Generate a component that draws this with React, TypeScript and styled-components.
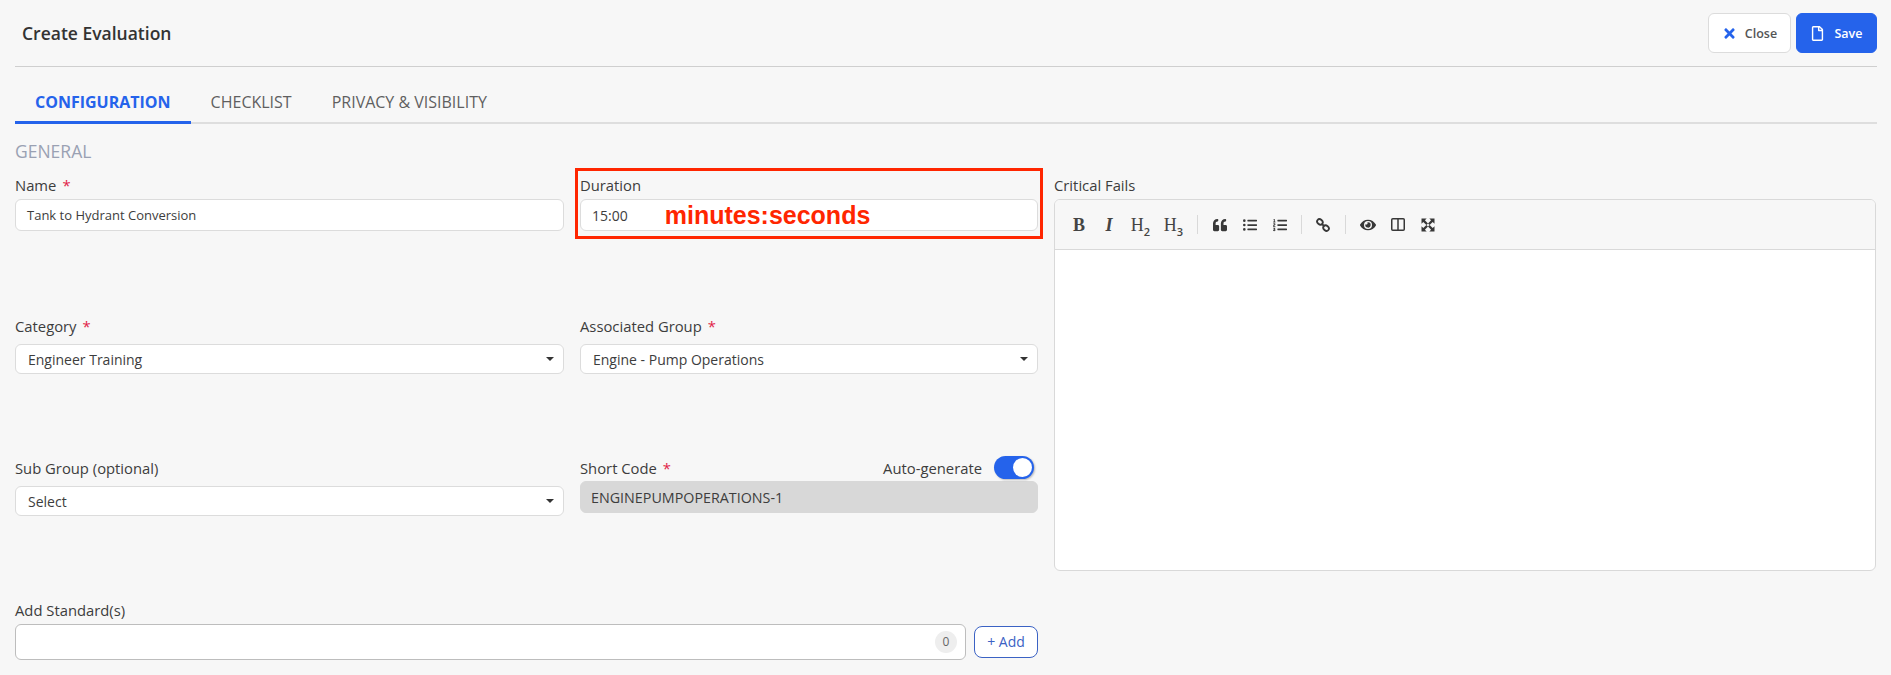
import { ReactNode } from 'react'
import styled, { createGlobalStyle } from 'styled-components'
import {
  FaEye,
  FaListOl,
  FaListUl,
  FaQuoteLeft,
  FaRegFile,
  FaTimes,
} from 'react-icons/fa'

const GlobalStyle = createGlobalStyle`
  html, body {
    margin: 0;
    background: #f7f7f7;
  }
  body {
    font-family: "Open Sans", "Noto Sans", sans-serif;
    color: #3a3a3a;
  }
`

const Page = styled.main`
  width: 1891px;
  height: 675px;
  box-sizing: border-box;
  padding: 0 14px 0 15px;
  overflow: hidden;
`

const Header = styled.header`
  height: 67px;
  box-sizing: border-box;
  padding: 13px 0 0 7px;
  display: flex;
  justify-content: space-between;
  align-items: flex-start;
  border-bottom: 1px solid #cfcfcf;
`

const Title = styled.h1`
  margin: 0;
  line-height: 41px;
  font-size: 17.5px;
  font-weight: 600;
  color: #333;
`

const Actions = styled.div`
  display: flex;
  gap: 5px;
`

const ActionButton = styled.button<{ $primary?: boolean }>`
  height: 40px;
  box-sizing: border-box;
  width: ${(p) => (p.$primary ? '81px' : '83px')};
  padding: 0;
  display: flex;
  align-items: center;
  justify-content: center;
  gap: ${(p) => (p.$primary ? '9px' : '8px')};
  border-radius: 6px;
  border: 1px solid ${(p) => (p.$primary ? '#2563eb' : '#dcdcdc')};
  background: ${(p) => (p.$primary ? '#2563eb' : '#fff')};
  color: ${(p) => (p.$primary ? '#fff' : '#555')};
  font-family: inherit;
  font-size: 12.5px;
  font-weight: 600;
  svg {
    color: ${(p) => (p.$primary ? '#fff' : '#2563eb')};
    font-size: 15px;
  }
`

const Tabs = styled.nav`
  height: 57px;
  box-sizing: border-box;
  display: flex;
  align-items: flex-end;
  border-bottom: 2px solid #dedede;
`

const Tab = styled.a<{ $active?: boolean }>`
  height: 38px;
  box-sizing: border-box;
  padding: 0 20px;
  margin-bottom: -2px;
  font-size: 16px;
  line-height: 33px;
  font-weight: ${(p) => (p.$active ? 700 : 400)};
  color: ${(p) => (p.$active ? '#2563eb' : '#5f5f5f')};
  border-bottom: 3px solid ${(p) => (p.$active ? '#2563eb' : 'transparent')};
`

const SectionTitle = styled.h2`
  margin: 0;
  height: 52px;
  line-height: 54px;
  font-size: 17.5px;
  font-weight: 400;
  color: #9aa1b3;
`

const FormGrid = styled.div`
  display: grid;
  grid-template-columns: 549px 458px 822px;
  column-gap: 16px;
  grid-template-rows: 141px 142px 141.5px auto;
`

const Field = styled.div`
  position: relative;
`

const EditorField = styled.div`
  grid-column: 3;
  grid-row: 1 / span 3;
`

const WideField = styled.div`
  grid-column: 1 / span 2;
`

const LabelRow = styled.div`
  height: 23px;
  display: flex;
  justify-content: space-between;
  align-items: flex-start;
`

const Label = styled.label`
  font-size: 14.8px;
  line-height: 18px;
  color: #3d3d3d;
`

const Required = styled.span`
  color: #e11d48;
  margin-left: 6px;
`

const Control = styled.div<{ $readonly?: boolean }>`
  height: 32px;
  box-sizing: border-box;
  display: flex;
  align-items: center;
  justify-content: space-between;
  padding: 0 9px 0 10px;
  border-radius: 6px;
  border: 1px solid ${(p) => (p.$readonly ? '#d8d8d8' : '#dcdcdc')};
  background: ${(p) => (p.$readonly ? '#d8d8d8' : '#fff')};
  font-size: 14px;
  color: #3d3d3d;
`

const NameControl = styled(Control)`
  font-size: 13px;
  padding-left: 11px;
`

const SelectControl = styled(Control)`
  height: 30px;
  margin-top: 4px;
  padding-left: 12px;
`

const Caret = styled.span`
  width: 0;
  height: 0;
  border-left: 4px solid transparent;
  border-right: 4px solid transparent;
  border-top: 4px solid #333;
`

const DurationControl = styled(Control)`
  justify-content: flex-start;
  padding-left: 11px;
`

const Annotation = styled.span`
  margin-left: 37px;
  font-family: "Liberation Sans", Arial, sans-serif;
  font-size: 25px;
  font-weight: 700;
  color: #ff2600;
`

const RedFrame = styled.div`
  position: absolute;
  top: -8px;
  left: -5px;
  width: 468px;
  height: 71px;
  box-sizing: border-box;
  border: 3px solid #ff2600;
  pointer-events: none;
`

const AutoGenerate = styled.div`
  display: flex;
  align-items: center;
  gap: 12px;
  margin: -3px 4px 0 0;
  font-size: 14.8px;
  line-height: 20px;
  color: #3d3d3d;
`

const Toggle = styled.span`
  width: 40px;
  height: 23px;
  box-sizing: border-box;
  padding: 2px;
  border-radius: 12px;
  display: flex;
  justify-content: flex-end;
  background: #2563eb;
  box-shadow: 1px 1px 2px rgba(0, 0, 0, 0.25);
`

const Knob = styled.span`
  width: 19px;
  height: 19px;
  border-radius: 50%;
  background: #fff;
`

const ShortCodeControl = styled(Control)`
  margin-top: -1px;
  font-size: 14.3px;
`

const Editor = styled.div`
  width: 822px;
  height: 372px;
  box-sizing: border-box;
  border: 1px solid #d9d9d9;
  border-radius: 6px;
  background: #fff;
  overflow: hidden;
`

const Toolbar = styled.div`
  height: 50px;
  box-sizing: border-box;
  padding-left: 9px;
  display: flex;
  align-items: center;
  background: #f7f7f7;
  border-bottom: 1px solid #d9d9d9;
`

const Tool = styled.span<{ $width?: number }>`
  width: ${(p) => p.$width ?? 30}px;
  display: flex;
  align-items: center;
  justify-content: center;
  color: #383838;
  font-size: 14px;
`

const EyeTool = styled(Tool)`
  font-size: 16px;
`

const Glyph = styled.span<{ $italic?: boolean; $light?: boolean }>`
  font-family: "Liberation Serif", "Times New Roman", serif;
  font-size: 18px;
  line-height: 20px;
  font-weight: ${(p) => (p.$light ? 400 : 700)};
  font-style: ${(p) => (p.$italic ? 'italic' : 'normal')};
  color: #444;
  sub {
    font-family: "Open Sans", sans-serif;
    font-weight: 600;
    font-size: 11px;
    line-height: 0;
  }
`

const Separator = styled.i<{ $gap?: number }>`
  width: 1px;
  height: 19px;
  margin: 0 ${(p) => p.$gap ?? 7}px;
  background: #d9d9d9;
`

const StandardsRow = styled.div`
  display: flex;
  align-items: center;
  gap: 8px;
`

const StandardsInput = styled.div`
  flex: 1;
  height: 36px;
  box-sizing: border-box;
  padding-right: 8px;
  display: flex;
  align-items: center;
  justify-content: flex-end;
  background: #fff;
  border: 1px solid #bdbdbd;
  border-radius: 6px;
`

const Count = styled.span`
  width: 22px;
  height: 22px;
  border-radius: 50%;
  display: flex;
  align-items: center;
  justify-content: center;
  background: #eee;
  color: #666;
  font-size: 12px;
`

const AddButton = styled.button`
  width: 64px;
  height: 32px;
  padding: 0;
  border: 1px solid #3b62c4;
  border-radius: 8px;
  background: #fff;
  color: #3b62c4;
  font-family: inherit;
  font-size: 14px;
`

function FormField({ label, required, extra, children }: {
  label: string
  required?: boolean
  extra?: ReactNode
  children: ReactNode
}) {
  return (
    <Field>
      <LabelRow>
        <Label>
          {label}
          {required && <Required>*</Required>}
        </Label>
        {extra}
      </LabelRow>
      {children}
    </Field>
  )
}

function SelectBox({ value }: { value: string }) {
  return (
    <SelectControl>
      {value}
      <Caret />
    </SelectControl>
  )
}

function ChainIcon() {
  return (
    <svg width="14" height="14" viewBox="0 0 15 15" fill="none" stroke="currentColor" strokeWidth="2">
      <ellipse cx="4.2" cy="4.2" rx="3.2" ry="2.6" transform="rotate(40 4.2 4.2)" />
      <ellipse cx="10.8" cy="10.8" rx="3.2" ry="2.6" transform="rotate(40 10.8 10.8)" />
      <path d="M6 6.2 9 8.8" />
    </svg>
  )
}

function ColumnsIcon() {
  return (
    <svg width="14" height="13" viewBox="0 0 14 13" fill="none" stroke="currentColor" strokeWidth="1.5">
      <rect x="0.75" y="0.75" width="12.5" height="11.5" rx="1" />
      <path d="M7 1v11" />
    </svg>
  )
}

function ExpandIcon() {
  const arm = 'M0.5 0.5h5.2L3.9 2.3 7 5.4 5.4 7 2.3 3.9 0.5 5.7z'
  return (
    <svg width="14" height="14" viewBox="0 0 14 14" fill="currentColor">
      <path d={arm} />
      <path d={arm} transform="rotate(90 7 7)" />
      <path d={arm} transform="rotate(180 7 7)" />
      <path d={arm} transform="rotate(270 7 7)" />
    </svg>
  )
}

export default function App() {
  return (
    <Page>
      <GlobalStyle />
      <Header>
        <Title>Create Evaluation</Title>
        <Actions>
          <ActionButton>
            <FaTimes />
            Close
          </ActionButton>
          <ActionButton $primary>
            <FaRegFile />
            Save
          </ActionButton>
        </Actions>
      </Header>

      <Tabs>
        <Tab $active>CONFIGURATION</Tab>
        <Tab>CHECKLIST</Tab>
        <Tab>PRIVACY &amp; VISIBILITY</Tab>
      </Tabs>

      <SectionTitle>GENERAL</SectionTitle>

      <FormGrid>
        <FormField label="Name" required>
          <NameControl>Tank to Hydrant Conversion</NameControl>
        </FormField>
        <FormField label="Duration">
          <DurationControl>
            15:00
            <Annotation>minutes:seconds</Annotation>
          </DurationControl>
          <RedFrame />
        </FormField>
        <EditorField>
          <LabelRow>
            <Label>Critical Fails</Label>
          </LabelRow>
          <Editor>
            <Toolbar>
              <Tool><Glyph>B</Glyph></Tool>
              <Tool><Glyph $italic>I</Glyph></Tool>
              <Tool $width={33}><Glyph $light>H<sub>2</sub></Glyph></Tool>
              <Tool $width={33}><Glyph $light>H<sub>3</sub></Glyph></Tool>
              <Separator />
              <Tool><FaQuoteLeft /></Tool>
              <Tool><FaListUl /></Tool>
              <Tool><FaListOl /></Tool>
              <Separator $gap={6} />
              <Tool><ChainIcon /></Tool>
              <Separator />
              <EyeTool><FaEye /></EyeTool>
              <Tool><ColumnsIcon /></Tool>
              <Tool><ExpandIcon /></Tool>
            </Toolbar>
          </Editor>
        </EditorField>

        <FormField label="Category" required>
          <SelectBox value="Engineer Training" />
        </FormField>
        <FormField label="Associated Group" required>
          <SelectBox value="Engine - Pump Operations" />
        </FormField>

        <FormField label="Sub Group (optional)">
          <SelectBox value="Select" />
        </FormField>
        <FormField
          label="Short Code"
          required
          extra={
            <AutoGenerate>
              Auto-generate
              <Toggle><Knob /></Toggle>
            </AutoGenerate>
          }
        >
          <ShortCodeControl $readonly>ENGINEPUMPOPERATIONS-1</ShortCodeControl>
        </FormField>

        <WideField>
          <LabelRow>
            <Label>Add Standard(s)</Label>
          </LabelRow>
          <StandardsRow>
            <StandardsInput>
              <Count>0</Count>
            </StandardsInput>
            <AddButton>+ Add</AddButton>
          </StandardsRow>
        </WideField>
      </FormGrid>
    </Page>
  )
}
